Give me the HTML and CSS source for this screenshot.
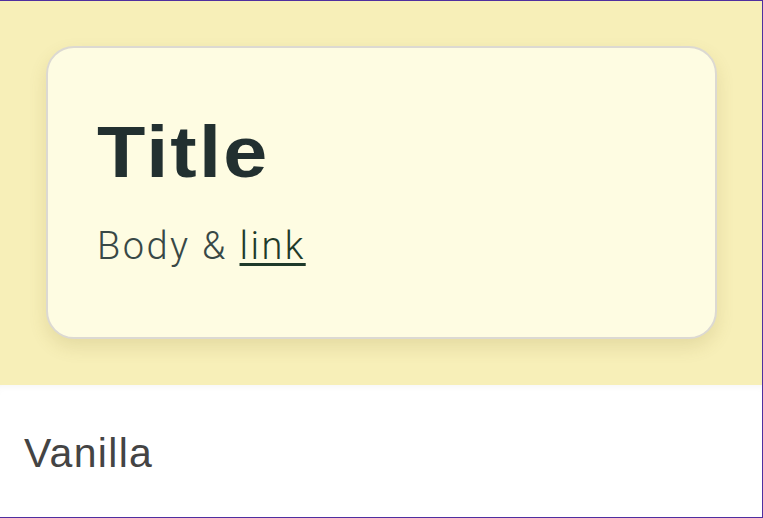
FILE: index.html
```html
<!DOCTYPE html>
<html lang="en">
<head>
    <meta charset="UTF-8">
    <meta name="viewport" content="width=device-width, initial-scale=1.0">
    <title>Theme preview</title>
    <link rel="stylesheet" href="styles.css">
</head>
<body>
    <div class="frame">
        <div class="hero">
            <div class="card">
                <h1><span class="title-text">Title</span></h1>
                <p class="body-text">Body &amp; <a href="#">link</a></p>
            </div>
        </div>

        <div class="theme-row">
            <span class="theme-name">Vanilla</span>
        </div>
    </div>
</body>
</html>
```

FILE: styles.css
```css
* {
    box-sizing: border-box;
}

body {
    margin: 0;
    padding: 0;
    font-family: "Liberation Sans", Arial, sans-serif;
    background-color: #fff;
}

.frame {
    height: 100vh;
    border-top: 1px solid #4f2f9f;
    border-right: 1px solid #4f2f9f;
    border-bottom: 1px solid #4f2f9f;
    display: flex;
    flex-direction: column;
}

.hero {
    background-color: #f7efb8;
    padding: 45px 45px 46px 46px;
}

.card {
    background-color: #fefce2;
    border: 2px solid #dcd9d2;
    border-radius: 28px;
    padding: 48px 48px 72px 49px;
    box-shadow: 0 8px 18px rgba(120, 100, 30, 0.14);
}

h1 {
    margin: 20px 0 0;
    font-family: "Liberation Sans", Arial, sans-serif;
    font-size: 72px;
    font-weight: 700;
    line-height: 1;
    color: #223030;
}

/* the reference face is a touch wider than Arial bold */
.title-text {
    display: inline-block;
    letter-spacing: 2px;
    transform: scaleX(1.1);
    transform-origin: left center;
}

.body-text {
    margin: 39px 0 0;
    font-family: Roboto, sans-serif;
    font-size: 38px;
    font-weight: 300;
    line-height: 1;
    letter-spacing: 2.4px;
    color: #384846;
}

.body-text a {
    color: #1e3a2a;
    text-decoration: underline;
    text-decoration-thickness: 3px;
    text-underline-offset: 4px;
}

.theme-row {
    flex: 1;
    padding: 48px 24px 0;
    box-shadow: inset 0 6px 8px -6px rgba(0, 0, 0, 0.06);
}

.theme-name {
    display: block;
    font-size: 41px;
    line-height: 1;
    letter-spacing: 1.3px;
    color: #444;
}
```
